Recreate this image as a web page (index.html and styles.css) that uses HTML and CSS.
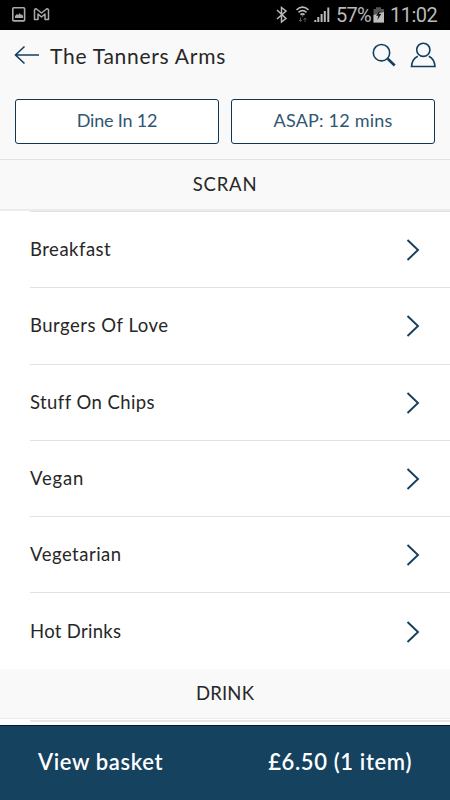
FILE: index.html
```html
<!DOCTYPE html>
<html lang="en">
<head>
<meta charset="utf-8">
<meta name="viewport" content="width=device-width">
<title>The Tanners Arms</title>
<link rel="stylesheet" href="styles.css">
</head>
<body>
<div class="app">
  <div class="status">
    <svg class="status-left" width="50" height="30" viewBox="0 0 50 30" fill="none" stroke="#aaa">
      <rect x="12.8" y="7.7" width="11.8" height="13.2" rx="1" stroke-width="1.6"/>
      <path d="M15 18v-2l2-2 1.2 1 1.4-2 1.4 2 1-.8L23 16v2z" fill="#aaa" stroke="none"/>
      <path d="M34.5 19.5V10q.5-1.500 2-1l5 4 5-4q1.500-.5 2 1v9.500H45V14l-3.500 3L38 14v5.500z" stroke-width="1.500" stroke-linejoin="round"/>
    </svg>
    <div class="status-right">
      <svg width="60" height="30" viewBox="0 0 60 30" fill="none" stroke="#b9b9b9">
        <path d="M7 10l9 8.500-4.500 3.500V7.500l4.500 3.500-9 8" stroke-width="1.500"/>
        <path d="M26.500 9.800q6-5.200 12 0M28.500 12.400q4-3.400 8 0M30.400 14.700q2.100-1.700 4.200 0" stroke-width="1.600"/>
        <path d="M31.500 15.500h2l-1 1.300z" fill="#b9b9b9" stroke="none"/>
        <path d="M30.500 17.500v4M29 20l1.500 1.500L32 20M35 22v-4M33.500 19.500L35 18l1.500 1.500" stroke="#555"/>
        <path d="M45 22v-2M48 22v-5M51.300 22v-8M54.500 22V11M58 22V7.500" transform="translate(.3 0)" stroke-width="2"/>
      </svg>
      <span class="percent">57%</span>
      <svg class="battery" width="12" height="16" viewBox="0 0 12 16">
        <path d="M.5 2H3V.3h5V2h3v13.500H.5z" fill="#555"/>
        <path d="M.5 8L11 5v10.500H.5z" fill="#bdbdbd"/>
        <path d="M7 3L3 8.800h2.300L4.300 13l4-6H6z" fill="#111"/>
      </svg>
      <span class="clock">11:02</span>
    </div>
  </div>

  <header class="header">
    <svg class="back" width="26" height="20" viewBox="0 0 26 20"><path d="M10.500 1.500L1.500 10l9 8.500M1.500 10H25"/></svg>
    <h1 class="title">The Tanners Arms</h1>
    <svg class="search" width="24" height="24" viewBox="0 0 24 24"><circle cx="9.500" cy="9.700" r="8.200"/><path d="M15.700 15.800l7 6.700" class="handle"/></svg>
    <svg class="user" width="26" height="26" viewBox="0 0 26 26"><circle cx="13.300" cy="7.800" r="6.600"/><path d="M7.800 14.200Q2 17 1.500 24.500H25Q24.500 17 18.800 14.200"/></svg>
  </header>

  <div class="options">
    <button class="option dine">Dine In 12</button>
    <button class="option asap">ASAP: 12 mins</button>
  </div>

  <main>
    <h2 class="section scran"><span>SCRAN</span></h2>
    <ul class="menu">
      <li><span class="breakfast">Breakfast</span><svg width="14" height="22" viewBox="0 0 14 22"><path d="M1.500 1L12 11 1.500 21"/></svg></li>
      <li><span class="burgers">Burgers Of Love</span><svg width="14" height="22" viewBox="0 0 14 22"><path d="M1.500 1L12 11 1.500 21"/></svg></li>
      <li><span class="chips">Stuff On Chips</span><svg width="14" height="22" viewBox="0 0 14 22"><path d="M1.500 1L12 11 1.500 21"/></svg></li>
      <li><span class="vegan">Vegan</span><svg width="14" height="22" viewBox="0 0 14 22"><path d="M1.500 1L12 11 1.500 21"/></svg></li>
      <li><span class="vegetarian">Vegetarian</span><svg width="14" height="22" viewBox="0 0 14 22"><path d="M1.500 1L12 11 1.500 21"/></svg></li>
      <li><span class="hot">Hot Drinks</span><svg width="14" height="22" viewBox="0 0 14 22"><path d="M1.500 1L12 11 1.500 21"/></svg></li>
    </ul>
    <h2 class="section drink"><span>DRINK</span></h2>
    <div class="next-list"></div>
  </main>

  <footer class="basket">
    <span class="view">View basket</span>
    <span class="total">£6.50 (1 item)</span>
  </footer>
</div>
</body>
</html>
```
FILE: styles.css
```css
* { box-sizing: border-box; }

body {
  margin: 0;
  background: #fff;
  color: #272727;
  font-family: Lato, "Open Sans", sans-serif;
}

.app {
  width: 450px;
  height: 800px;
  overflow: hidden;
  display: flex;
  flex-direction: column;
}

.status {
  flex: none;
  height: 30px;
  padding-right: 12px;
  display: flex;
  justify-content: space-between;
  background: #000;
  color: #b9b9b9;
  font: 20px/30px Roboto, sans-serif;
}

.status svg { display: block; }
.status-right { display: flex; }
.percent { margin-left: 6px; width: 36px; letter-spacing: -.8px; }
.battery { margin: 7px 5px 0 1px; }
.clock { width: 48px; letter-spacing: -.5px; white-space: nowrap; }

.header {
  flex: none;
  height: 54px;
  padding: 0 14px 4px 14px;
  display: flex;
  align-items: center;
  background: #f9f9f9;
}

.header svg {
  flex: none;
  fill: none;
  stroke: #123f60;
  stroke-width: 1.6;
}

.title {
  margin: 2px auto 0 10px;
  font-size: 21px;
  line-height: 28px;
  font-weight: 400;
  letter-spacing: .73px;
  white-space: nowrap;
}

.search { margin-right: 14px; }
.header .handle { stroke-width: 2.6; }

.options {
  flex: none;
  height: 75px;
  padding: 15px 15px 0;
  display: grid;
  grid-template-columns: 1fr 1fr;
  gap: 12px;
  background: #f9f9f9;
}

.option {
  height: 45px;
  padding: 0 0 2px;
  border: 1px solid #123550;
  border-radius: 3px;
  background: #fff;
  color: #315671;
  font: 400 18px/41px Lato, sans-serif;
}

.dine { letter-spacing: -.2px; }
.asap { letter-spacing: .2px; }

.section {
  height: 52px;
  margin: 0;
  border-top: 1px solid #e2e2e2;
  border-bottom: 2px solid #ebebeb;
  background: #f9f9f9;
  font-size: 18.5px;
  line-height: 49px;
  font-weight: 400;
  letter-spacing: .8px;
  text-align: center;
}

.menu {
  margin: 0;
  padding: 0 0 0 30px;
  list-style: none;
}

.menu li {
  height: 76.300px;
  padding: 0 30px 1px 0;
  border-top: 1px solid #e2e2e2;
  display: flex;
  align-items: center;
  justify-content: space-between;
  font-size: 18.500px;
  letter-spacing: .5px;
}

.menu .chips { letter-spacing: .42px; }
.menu .vegan { letter-spacing: .8px; }
.menu .hot { letter-spacing: .3px; }

.menu svg {
  margin-top: 2px;
  fill: none;
  stroke: #123f60;
  stroke-width: 1.900;
}

.section.drink {
  height: 50px;
  border-top: 0;
  border-bottom-width: 1px;
  letter-spacing: .2px;
}

.next-list {
  height: 2px;
  margin: 1px 0 0 30px;
  background: #e6e6e6;
}

.basket {
  flex: none;
  height: 75px;
  margin-top: auto;
  padding: 0 38px 3px;
  border-top: 1px solid #00163a;
  display: flex;
  align-items: center;
  justify-content: space-between;
  background: #14425f;
  color: #fff;
  font-size: 22px;
  font-weight: 600;
  letter-spacing: .64px;
}
```
